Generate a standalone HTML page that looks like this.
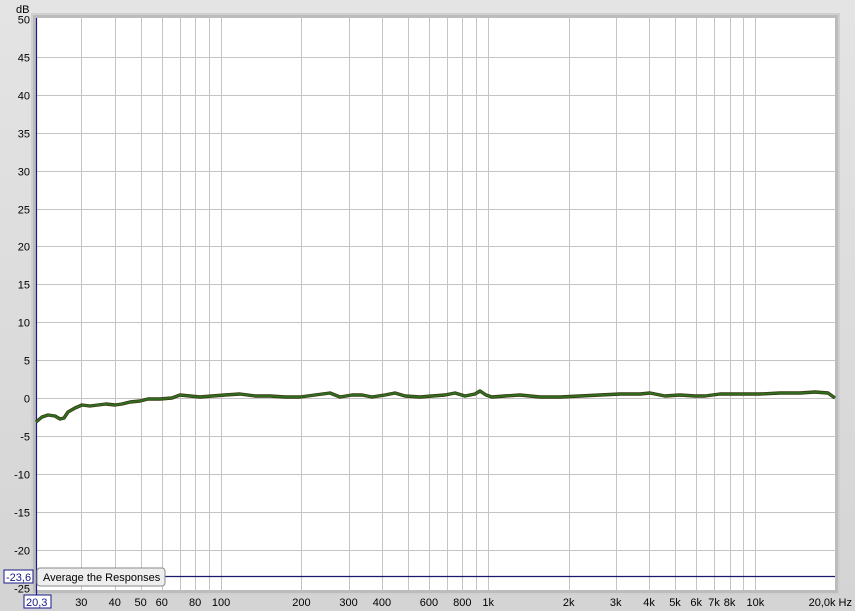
<!DOCTYPE html>
<html><head><style>
body{margin:0;width:855px;height:611px;overflow:hidden;background:linear-gradient(#e4e4e4,#d4d4d4);font-family:"Liberation Sans",sans-serif;}
</style></head><body>
<svg width="855" height="611" xmlns="http://www.w3.org/2000/svg" style="position:absolute;left:0;top:0">
<rect x="31" y="13" width="809" height="582" fill="#d0d0d0"/>
<rect x="33" y="15" width="805" height="578" fill="#bcbcbc"/>
<rect x="36" y="18" width="799" height="572" fill="#ffffff"/>
<g stroke="#c4c4c4" stroke-width="1" id="vg"></g>
<g id="hg" stroke="#c4c4c4" stroke-width="1"></g>
<g font-size="11" fill="#000" id="lab"></g>
<line x1="36" y1="576.5" x2="835" y2="576.5" stroke="#1a1a6a" stroke-width="1.2"/>
<line x1="36.5" y1="18" x2="36.5" y2="595" stroke="#1a1a8a" stroke-width="1.2"/>
<path d="M36,422 L42,417 L48,415 L55,416 L60,419 L64,418 L68,412 L75,408 L82,405 L90,406 L98,405 L106,404 L115,405 L122,404 L130,402 L140,401 L148,399 L160,399 L172,398 L180,395 L190,396 L200,397 L212,396 L225,395 L240,394 L255,396 L270,396 L285,397 L300,397 L315,395 L330,393 L340,397 L352,395 L362,395 L372,397 L385,395 L395,393 L405,396 L420,397 L432,396 L445,395 L455,393 L465,396 L475,394 L480,391 L486,395 L492,397 L505,396 L520,395 L540,397 L560,397 L580,396 L600,395 L620,394 L640,394 L650,393 L665,396 L680,395 L695,396 L705,396 L720,394 L740,394 L760,394 L780,393 L800,393 L815,392 L828,393 L835,398" fill="none" stroke="#3a3a14" stroke-width="3.4" stroke-linejoin="round"/>
<path d="M36,422 L42,417 L48,415 L55,416 L60,419 L64,418 L68,412 L75,408 L82,405 L90,406 L98,405 L106,404 L115,405 L122,404 L130,402 L140,401 L148,399 L160,399 L172,398 L180,395 L190,396 L200,397 L212,396 L225,395 L240,394 L255,396 L270,396 L285,397 L300,397 L315,395 L330,393 L340,397 L352,395 L362,395 L372,397 L385,395 L395,393 L405,396 L420,397 L432,396 L445,395 L455,393 L465,396 L475,394 L480,391 L486,395 L492,397 L505,396 L520,395 L540,397 L560,397 L580,396 L600,395 L620,394 L640,394 L650,393 L665,396 L680,395 L695,396 L705,396 L720,394 L740,394 L760,394 L780,393 L800,393 L815,392 L828,393 L835,398" fill="none" stroke="#2f7020" stroke-width="1.8" stroke-linejoin="round"/>
<rect x="37" y="568" width="128" height="18" rx="3" fill="#eeeeee" stroke="#8a8a8a"/>
<text x="43" y="581" font-size="11">Average the Responses</text>
<rect x="4" y="570" width="29" height="13" fill="#fff" stroke="#1a1a8a"/>
<text x="6" y="581" font-size="11" fill="#1a1a8a">-23,6</text>
<rect x="24" y="595" width="27" height="13" fill="#fff" stroke="#1a1a8a"/>
<text x="26" y="606" font-size="11" fill="#1a1a8a">20,3</text>
<text x="16" y="13" font-size="11">dB</text>
</svg>
<script>
var ns="http://www.w3.org/2000/svg";
function px(f){return 36+267.2*Math.log10(f/20.3);}
var vg=document.getElementById('vg'),hg=document.getElementById('hg'),lab=document.getElementById('lab');
var fs=[30,40,50,60,70,80,90,100,200,300,400,500,600,700,800,900,1000,2000,3000,4000,5000,6000,7000,8000,9000,10000];
fs.forEach(function(f){var x=Math.round(px(f))+0.5;var l=document.createElementNS(ns,'line');l.setAttribute('x1',x);l.setAttribute('x2',x);l.setAttribute('y1',18);l.setAttribute('y2',590);vg.appendChild(l);});
var ls={30:'30',40:'40',50:'50',60:'60',80:'80',100:'100',200:'200',300:'300',400:'400',600:'600',800:'800',1000:'1k',2000:'2k',3000:'3k',4000:'4k',5000:'5k',6000:'6k',7000:'7k',8000:'8k',10000:'10k'};
for(var k in ls){var t=document.createElementNS(ns,'text');t.setAttribute('x',px(+k));t.setAttribute('y',606);t.setAttribute('text-anchor','middle');t.textContent=ls[k];lab.appendChild(t);}
var t=document.createElementNS(ns,'text');t.setAttribute('x',852);t.setAttribute('y',606);t.setAttribute('text-anchor','end');t.textContent='20,0k Hz';lab.appendChild(t);
for(var d=50;d>=-25;d-=5){var y=Math.round(398-7.58*d)+0.5;if(d<50&&d>-25){var l=document.createElementNS(ns,'line');l.setAttribute('x1',36);l.setAttribute('x2',835);l.setAttribute('y1',y);l.setAttribute('y2',y);hg.appendChild(l);}
var tt=document.createElementNS(ns,'text');tt.setAttribute('x',30);tt.setAttribute('y',y+4);tt.setAttribute('text-anchor','end');tt.textContent=d;lab.appendChild(tt);}
</script>
</body></html>
